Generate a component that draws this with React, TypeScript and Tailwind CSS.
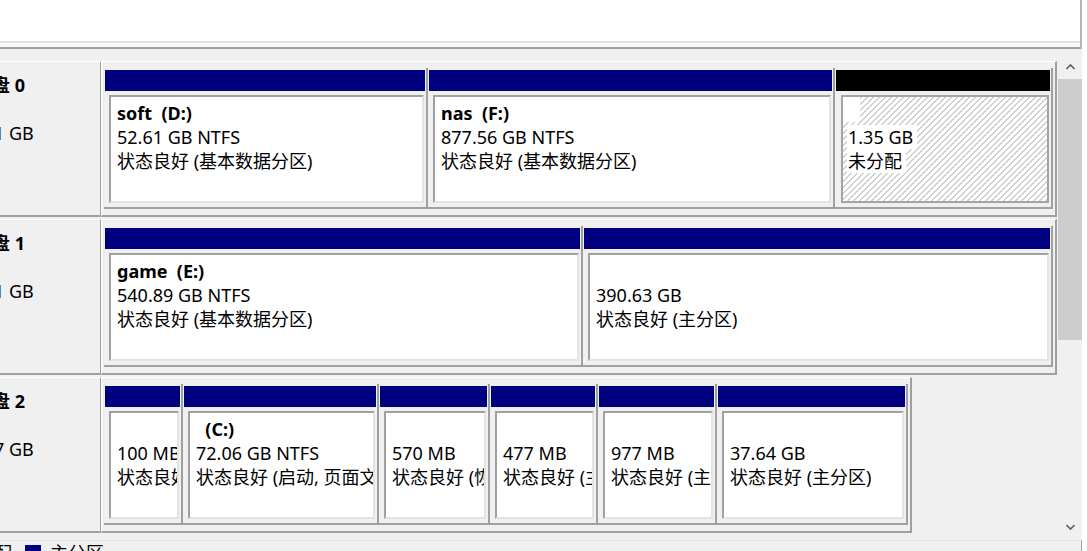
import React from "react";

type Part = {
  w: string;
  lines: [string, string, string];
  unalloc?: boolean;
};

type Disk = {
  name: string;
  size: string;
  parts: Part[];
};

const disks: Disk[] = [
  {
    name: "磁盘 0",
    size: "931.51 GB",
    parts: [
      { w: "w-[324px]", lines: ["soft  (D:)", "52.61 GB NTFS", "状态良好 (基本数据分区)"] },
      { w: "w-[407px]", lines: ["nas  (F:)", "877.56 GB NTFS", "状态良好 (基本数据分区)"] },
      { w: "w-[218px]", unalloc: true, lines: ["", "1.35 GB", "未分配"] },
    ],
  },
  {
    name: "磁盘 1",
    size: "931.51 GB",
    parts: [
      { w: "w-[479px]", lines: ["game  (E:)", "540.89 GB NTFS", "状态良好 (基本数据分区)"] },
      { w: "w-[470px]", lines: ["", "390.63 GB", "状态良好 (主分区)"] },
    ],
  },
  {
    name: "磁盘 2",
    size: "111.77 GB",
    parts: [
      { w: "w-[79px]", lines: ["", "100 MB", "状态良好 (EFI 系统分区)"] },
      { w: "w-[196px]", lines: ["  (C:)", "72.06 GB NTFS", "状态良好 (启动, 页面文件, 故障转储, 基本数据分区)"] },
      { w: "w-[111px]", lines: ["", "570 MB", "状态良好 (恢复分区)"] },
      { w: "w-[108px]", lines: ["", "477 MB", "状态良好 (主分区)"] },
      { w: "w-[119px]", lines: ["", "977 MB", "状态良好 (主分区)"] },
      { w: "w-[191px]", lines: ["", "37.64 GB", "状态良好 (主分区)"] },
    ],
  },
];

function PartCol({ p }: { p: Part }) {
  return (
    <div
      className={`${p.w} shrink-0 flex flex-col pt-[2px] pl-px pr-px border-r-2 border-b-2 border-r-[#a0a0a0] border-b-[#a0a0a0]`}
    >
      <div className={`h-[21px] shrink-0 ${p.unalloc ? "bg-black" : "bg-[#000080]"}`} />
      {p.unalloc ? (
        <div className="h-[116px] pt-[4px] pb-[4px] pl-[5px] pr-px">
          <div className="h-full border-2 border-[#a4a4a4] bg-[repeating-linear-gradient(135deg,#cfcfcf_0px,#cfcfcf_1px,#ffffff_1px,#ffffff_4.24px)] overflow-hidden pl-[4px] pt-[4px] text-[18px] leading-[24px] whitespace-pre">
            <div className="ml-[-4px] mt-[-4px] mb-[3px] h-[25px] w-[17px] bg-white" />
            <div>
              <span className="bg-white pl-px pr-[4px]">{p.lines[1]}</span>
            </div>
            <div>
              <span className="bg-white pl-px pr-[4px]">{p.lines[2]}</span>
            </div>
          </div>
        </div>
      ) : (
        <div className="h-[116px] pt-[4px] pb-[4px] pl-[4px] pr-px">
          <div className="h-full border-2 border-t-[#a0a0a0] border-l-[#a0a0a0] border-r-[#e3e3e3] border-b-[#e3e3e3] bg-white overflow-hidden pl-[6px] pt-[4px] text-[18px] leading-[24px] whitespace-pre">
            <div className="font-bold h-[24px]">{p.lines[0]}</div>
            <div>{p.lines[1]}</div>
            <div>{p.lines[2]}</div>
          </div>
        </div>
      )}
    </div>
  );
}

function DiskRow({ d }: { d: Disk }) {
  return (
    <div className="flex h-[156px] shrink-0">
      <div className="w-[101px] shrink-0 border-t border-t-white border-r border-r-[#a0a0a0] border-b-2 border-b-[#a0a0a0] overflow-hidden">
        <div className="ml-[-52px] pt-[11px] text-[18px] leading-[24px] whitespace-pre">
          <div className="flex">
            <span className="w-[26px] shrink-0" />
            <span className="font-bold">{d.name}</span>
          </div>
          <div>基本</div>
          <div>{d.size}</div>
          <div>联机</div>
        </div>
      </div>
      <div className="self-start flex border-t border-l border-t-white border-l-white border-r-2 border-b-2 border-r-[#a0a0a0] border-b-[#a0a0a0] pt-[6px] pl-[2px] pr-[2px] pb-[6px]">
        {d.parts.map((p, i) => (
          <PartCol key={i} p={p} />
        ))}
      </div>
    </div>
  );
}

function Chevron({ up }: { up: boolean }) {
  return (
    <svg width="11" height="7" viewBox="0 0 11 7">
      <polyline
        points={up ? "1.5,6 5.5,2 9.5,6" : "1.5,1 5.5,5 9.5,1"}
        fill="none"
        stroke="#606060"
        strokeWidth="1.7"
      />
    </svg>
  );
}

export default function App() {
  return (
    <div className="w-[1087px] h-[551px] overflow-hidden bg-white flex text-black font-['Noto_Sans','Noto_Sans_CJK_SC',sans-serif]">
      <div className="w-[1082px] shrink-0 flex flex-col bg-[#f0f0f0]">
        <div className="h-[49px] shrink-0 flex flex-col border-r-2 border-r-[#b4b4b4]">
          <div className="h-[41px] bg-white" />
          <div className="h-[2px] bg-[#e3e3e3]" />
          <div className="h-[4px] bg-[#f7f7f7]" />
          <div className="h-[2px] bg-[#a0a0a0]" />
        </div>
        <div className="h-[5px] shrink-0" />
        <div className="h-[486px] shrink-0 flex">
          <div className="flex-1 flex flex-col gap-[2px] pt-[7px] overflow-hidden">
            {disks.map((d, i) => (
              <DiskRow key={i} d={d} />
            ))}
          </div>
          <div className="w-[25px] shrink-0 flex flex-col pl-px">
            <div className="h-[25px] flex items-center justify-center">
              <Chevron up />
            </div>
            <div className="h-[261px] bg-[#cdcdcd]" />
            <div className="flex-1" />
            <div className="h-[25px] flex items-center justify-center">
              <Chevron up={false} />
            </div>
          </div>
        </div>
        <div className="flex-1 border-t border-t-[#e3e3e3] border-r border-r-[#a0a0a0] overflow-hidden">
          <div className="flex items-start ml-[-70px] text-[18px] leading-[24px] whitespace-pre">
            <span className="mt-[4px] w-[16px] h-[16px] shrink-0 bg-black" />
            <span className="ml-[12px]">未分配</span>
            <span className="ml-[13px] mt-[4px] w-[16px] h-[16px] shrink-0 bg-[#000080]" />
            <span className="ml-[9px]">主分区</span>
          </div>
        </div>
      </div>
      <div className="flex-1 bg-white" />
    </div>
  );
}
